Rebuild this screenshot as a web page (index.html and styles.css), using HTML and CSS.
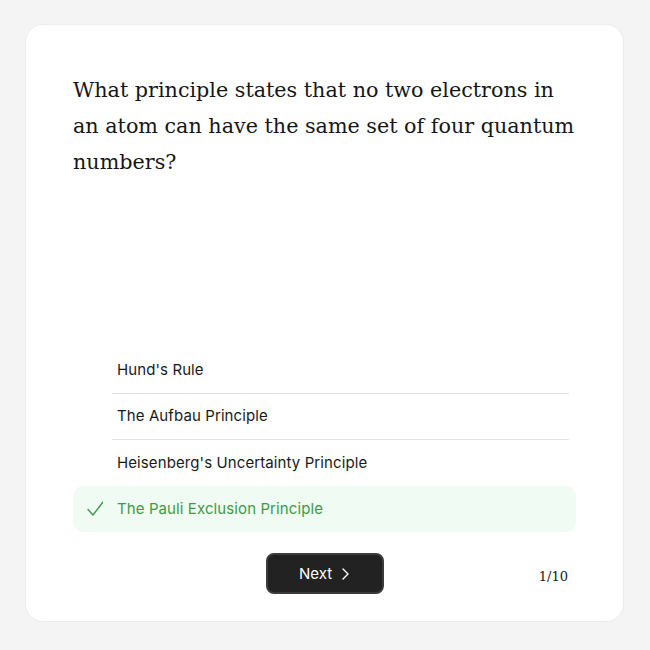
FILE: index.html
```html
<!DOCTYPE html>
<html>
<head>
    <title>Quiz</title>
    <link rel="stylesheet" href="styles.css">
</head>
<body>
    <div class="card">
        <h1 class="question">What principle states that no two electrons in an atom can have the same set of four quantum numbers?</h1>

        <ul class="options">
            <li class="option">
                <span class="mark"></span>
                <span class="label">Hund's Rule</span>
            </li>
            <li class="option">
                <span class="mark"></span>
                <span class="label">The Aufbau Principle</span>
            </li>
            <li class="option">
                <span class="mark"></span>
                <span class="label">Heisenberg's Uncertainty Principle</span>
            </li>
            <li class="option selected">
                <span class="mark">
                    <svg width="16" height="16" viewBox="0 0 16 16" fill="none" stroke="currentColor" stroke-width="1.4" stroke-linecap="round" stroke-linejoin="round"><path d="M1 8.5l5 5.5 10-13"/></svg>
                </span>
                <span class="label">The Pauli Exclusion Principle</span>
            </li>
        </ul>

        <div class="footer">
            <button class="next-button">
                Next
                <svg width="10" height="14" viewBox="0 0 10 14" fill="none" stroke="currentColor" stroke-width="1.4" stroke-linecap="round" stroke-linejoin="round"><path d="M3 2l5 5-5 5"/></svg>
            </button>
            <span class="counter">1/10</span>
        </div>
    </div>
</body>
</html>
```

FILE: styles.css
```css
* {
    box-sizing: border-box;
    margin: 0;
    padding: 0;
}

body {
    padding: 24px 26px 0 25px;
    background-color: #f4f4f4;
    font-family: Inter, 'Noto Sans', sans-serif;
    color: #1a1a1a;
}

.card {
    height: 598px;
    background: #ffffff;
    border: 1px solid #ececec;
    border-radius: 18px;
    padding: 47px 47px 27px;
    display: flex;
    flex-direction: column;
}

.question {
    font-family: 'DejaVu Serif', serif;
    font-weight: 400;
    font-size: 20.7px;
    line-height: 36px;
    color: #161616;
}

.options {
    list-style: none;
    margin-top: auto;
}

.option {
    display: flex;
    align-items: stretch;
    height: 46px;
    font-size: 15px;
    letter-spacing: 0.1px;
}

.mark {
    width: 39px;
    flex-shrink: 0;
    display: flex;
    align-items: center;
    padding-left: 14px;
}

.label {
    flex: 1;
    display: flex;
    align-items: center;
    padding-left: 5px;
    padding-bottom: 2px;
    margin-right: 7px;
    border-bottom: 1px solid #e3e3e3;
}

.option:nth-child(3) .label,
.option.selected .label {
    border-bottom: none;
}

.option.selected {
    background: #effbf3;
    border-radius: 10px;
    color: #3f9a48;
}

.footer {
    margin-top: 21px;
    display: grid;
    grid-template-columns: 1fr auto 1fr;
    align-items: center;
}

.next-button {
    grid-column: 2;
    width: 118px;
    height: 41px;
    background: #222222;
    border: 2px solid #3b3b3b;
    border-radius: 8px;
    color: #ffffff;
    font-family: Inter, 'Noto Sans', sans-serif;
    font-size: 15px;
    font-weight: 400;
    display: flex;
    align-items: center;
    justify-content: center;
    gap: 8px;
    cursor: pointer;
}

.counter {
    justify-self: end;
    margin-right: 8px;
    margin-top: 6px;
    font-family: 'DejaVu Serif', serif;
    font-size: 13px;
    color: #1a1a1a;
}
```
